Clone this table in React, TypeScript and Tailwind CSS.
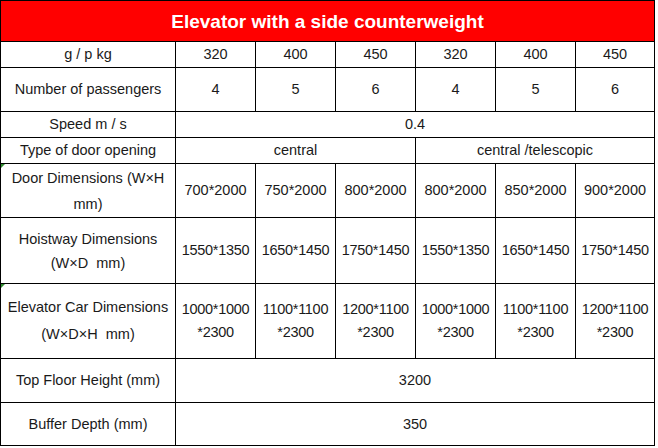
import type { ReactNode } from "react";

const cols = ["320", "400", "450", "320", "400", "450"];

function Cell({
  children,
  span = "",
  mark = false,
  className = "",
}: {
  children: ReactNode;
  span?: string;
  mark?: boolean;
  className?: string;
}) {
  return (
    <div className={`relative flex items-center justify-center bg-white text-center ${span} ${className}`}>
      {mark && (
        <span className="absolute left-0 top-0 h-0 w-0 border-r-[4px] border-t-[4px] border-r-transparent border-t-[#2f8a2f]" />
      )}
      {children}
    </div>
  );
}

export default function App() {
  return (
    <div className="h-[448px] w-[658px] bg-white">
      <div
        className="grid w-[655px] gap-px bg-black p-px text-[14.5px] text-[#1a1a1a] leading-none"
        style={{ fontFamily: '"Liberation Sans", Arial, sans-serif' }}
      >
        <div className="grid grid-cols-[174px_repeat(5,79px)_78px] grid-rows-[40px_25px_43px_25px_25px_53px_65px_74px_43px_42px] gap-px">
          <div className="col-span-7 flex items-center justify-center bg-[#ff0000] text-[19px] font-bold text-white">
            Elevator with a side counterweight
          </div>

          <Cell>g / p kg</Cell>
          {cols.map((c, i) => (
            <Cell key={`w${i}`}>{c}</Cell>
          ))}

          <Cell>Number of passengers</Cell>
          {["4", "5", "6", "4", "5", "6"].map((c, i) => (
            <Cell key={`p${i}`}>{c}</Cell>
          ))}

          <Cell>Speed m / s</Cell>
          <Cell span="col-span-6">0.4</Cell>

          <Cell>Type of door opening</Cell>
          <Cell span="col-span-3">central</Cell>
          <Cell span="col-span-3">central /telescopic</Cell>

          <Cell mark className="leading-[26px]">
            Door Dimensions (W×H
            <br />
            mm)
          </Cell>
          {["700*2000", "750*2000", "800*2000", "800*2000", "850*2000", "900*2000"].map((c, i) => (
            <Cell key={`d${i}`}>{c}</Cell>
          ))}

          <Cell className="leading-[24px]">
            Hoistway Dimensions
            <br />
            (W×D&nbsp; mm)
          </Cell>
          {["1550*1350", "1650*1450", "1750*1450", "1550*1350", "1650*1450", "1750*1450"].map((c, i) => (
            <Cell key={`h${i}`} className="tracking-[-0.3px]">{c}</Cell>
          ))}

          <Cell mark className="leading-[27px]">
            Elevator Car Dimensions
            <br />
            (W×D×H&nbsp; mm)
          </Cell>
          {["1000*1000", "1100*1100", "1200*1100", "1000*1000", "1100*1100", "1200*1100"].map((c, i) => (
            <Cell key={`c${i}`} className="leading-[23px] tracking-[-0.3px]">
              {c}
              <br />
              *2300
            </Cell>
          ))}

          <Cell>Top Floor Height (mm)</Cell>
          <Cell span="col-span-6">3200</Cell>

          <Cell>Buffer Depth (mm)</Cell>
          <Cell span="col-span-6">350</Cell>
        </div>
      </div>
    </div>
  );
}
